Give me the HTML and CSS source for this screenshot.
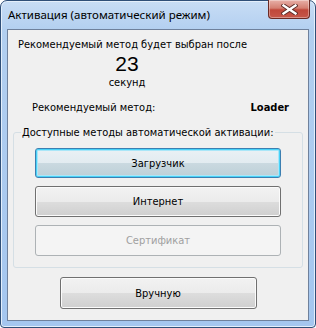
FILE: index.html
```html
<!DOCTYPE html>
<html>
<head>
<meta charset="utf-8">
<link rel="stylesheet" href="styles.css">
</head>
<body>
<div class="window">
  <div class="titlebar">
    <span class="title">Активация (автоматический режим)</span>
    <div class="close">
      <svg width="17" height="11" viewBox="0 0 17 11">
        <path d="M2.5 1.5 L14.5 9.5 M14.5 1.5 L2.5 9.5" stroke="#5a2a26" stroke-width="4.2" stroke-linecap="square"/>
        <path d="M2.5 1.5 L14.5 9.5 M14.5 1.5 L2.5 9.5" stroke="#ffffff" stroke-width="2.4" stroke-linecap="square"/>
      </svg>
    </div>
  </div>
  <div class="client">
    <div class="intro">Рекомендуемый метод будет выбран после</div>
    <div class="countdown">
      <div class="num">23</div>
      <div class="unit">секунд</div>
    </div>
    <div class="recommend">
      <span>Рекомендуемый метод:</span>
      <span class="method">Loader</span>
    </div>
    <fieldset class="group">
      <legend>Доступные методы автоматической активации:</legend>
      <button class="btn default">Загрузчик</button>
      <button class="btn">Интернет</button>
      <button class="btn" disabled>Сертификат</button>
    </fieldset>
    <div class="footer">
      <button class="btn manual">Вручную</button>
    </div>
  </div>
</div>
</body>
</html>
```

FILE: styles.css
```css
html, body {
  margin: 0;
  padding: 0;
  background: #ffffff;
}

.window {
  box-sizing: border-box;
  width: 316px;
  height: 328px;
  border: 1px solid #2f4f78;
  border-radius: 7px 7px 4px 4px;
  background: linear-gradient(to bottom, #c8ddf5 0px, #b2cff0 30px, #a4c6ef 100%);
  padding: 0 6px 6px 6px;
  display: flex;
  flex-direction: column;
  box-shadow: inset 0 0 0 1px #e4effb;
}

.titlebar {
  height: 28px;
  flex: none;
  display: flex;
  align-items: flex-start;
  position: relative;
}

.title {
  font-family: "Noto Sans", "DejaVu Sans", sans-serif;
  font-size: 11.5px;
  color: #000;
  margin-top: 6px;
  margin-left: 1px;
  line-height: 16px;
}

.close {
  position: absolute;
  right: -1px;
  top: -1px;
  width: 42px;
  height: 19px;
  box-sizing: border-box;
  border: 1px solid #6b2a24;
  border-top: none;
  border-radius: 0 0 4px 4px;
  background: linear-gradient(to bottom, #e8b0a8 0%, #d47f72 45%, #c0473a 55%, #c6574a 100%);
  display: flex;
  align-items: center;
  justify-content: center;
  box-shadow: inset 0 0 0 1px rgba(255,255,255,0.35);
}

.client {
  flex: 1;
  min-height: 0;
  border: 1px solid #6f819c;
  background: #f0f0f0;
  font-family: "DejaVu Sans Condensed", "DejaVu Sans", sans-serif;
  font-stretch: condensed;
  font-size: 11px;
  color: #000;
  display: flex;
  flex-direction: column;
}

.intro {
  margin: 8px 0 0 10px;
  line-height: 13px;
}

.countdown {
  width: 238px;
  text-align: center;
}

.num {
  font-family: "Liberation Sans", sans-serif;
  font-size: 21px;
  line-height: 20px;
  margin-top: 3px;
}

.unit {
  line-height: 13px;
  margin-top: 2px;
}

.recommend {
  display: flex;
  justify-content: space-between;
  margin: 12px 19px 0 24px;
  line-height: 13px;
}

.method {
  font-weight: bold;
}

.group {
  margin: 12px 5px 0 5px;
  padding: 9px 21px 11px 21px;
  border: 1px solid #d5dfe5;
  border-radius: 3px;
  display: flex;
  flex-direction: column;
  gap: 8px;
  min-width: 0;
}

.group legend {
  padding: 0 1px;
  margin-left: -14px;
  line-height: 13px;
  white-space: nowrap;
}

.btn {
  font-family: "DejaVu Sans Condensed", "DejaVu Sans", sans-serif;
  font-stretch: condensed;
  font-size: 11px;
  color: #000;
  height: 31px;
  border: 1px solid #707070;
  border-radius: 3px;
  background: linear-gradient(to bottom, #f2f2f2 0%, #ebebeb 50%, #dddddd 50%, #cfcfcf 100%);
  box-shadow: inset 0 0 0 1px #fbfbfb;
  padding: 0;
}

.btn.default {
  height: 30px;
  border-color: #3c7fb1;
  background: linear-gradient(to bottom, #eaf1f5 0%, #e2ebf0 50%, #cad9e0 50%, #bccfd7 100%);
  box-shadow: inset 0 0 0 1px #48d2f8, inset 0 0 0 2px #a9e6f8;
}

.btn:disabled {
  border-color: #adb2b5;
  background: #f4f4f4;
  color: #a0a0a0;
  box-shadow: none;
}

.footer {
  display: flex;
  justify-content: center;
  margin-top: 9px;
}

.btn.manual {
  width: 197px;
  height: 32px;
}
```
